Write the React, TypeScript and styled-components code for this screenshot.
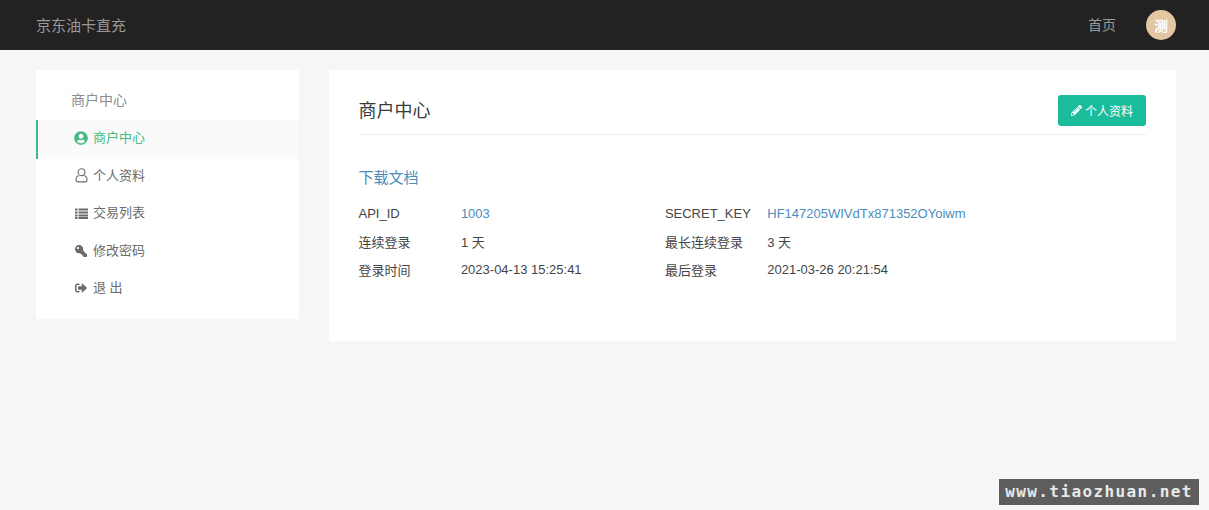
import { FaKey, FaPencilAlt, FaSignOutAlt, FaUserCircle } from 'react-icons/fa';
import styled, { createGlobalStyle } from 'styled-components';

const GlobalStyle = createGlobalStyle`
  html, body {
    margin: 0;
    padding: 0;
    min-height: 510px;
    background: #f4f6f8;
    font-family: "Liberation Sans", "Noto Sans CJK SC", sans-serif;
    color: #333;
  }
`;

const UserOutline = () => (
  <svg width="13" height="15" viewBox="0 0 13 15" fill="none" stroke="currentColor" strokeWidth="1.1">
    <circle cx="6.5" cy="4.2" r="3.4" />
    <path d="M3.6 7.6C2 8.3 1 9.6 1 11.2v1c0 1 .7 1.7 1.7 1.7h7.6c1 0 1.7-.7 1.7-1.7v-1c0-1.6-1-2.9-2.6-3.6" />
  </svg>
);

const ListIcon = () => (
  <svg width="13" height="11" viewBox="0 0 13 11" fill="currentColor">
    <path d="M0 .5h2.5v2H0zM3.5.5H13v2H3.5zM0 3.5h2.5v2H0zM3.5 3.5H13v2H3.5zM0 6.5h2.5v2H0zM3.5 6.5H13v2H3.5zM0 9h2.5v2H0zM3.5 9H13v2H3.5z" />
  </svg>
);

const menu = [
  { label: '商户中心', icon: <FaUserCircle size={14} />, active: true },
  { label: '个人资料', icon: <UserOutline /> },
  { label: '交易列表', icon: <ListIcon /> },
  { label: '修改密码', icon: <FaKey size={12} style={{ transform: 'scaleX(-1)' }} /> },
  { label: '退 出', icon: <FaSignOutAlt size={12} /> },
];

const App = () => {
  return (
    <div>
      <GlobalStyle />
      <Header>
        <Brand>京东油卡直充</Brand>
        <HeaderRight>
          <HomeLink>首页</HomeLink>
          <Avatar>测</Avatar>
        </HeaderRight>
      </Header>
      <Main>
        <Sidebar>
          <SideTitle>商户中心</SideTitle>
          {menu.map((item) => (
            <MenuItem key={item.label} $active={item.active}>
              <MenuIcon>{item.icon}</MenuIcon>
              {item.label}
            </MenuItem>
          ))}
        </Sidebar>
        <Content>
          <ContentHead>
            <Heading>商户中心</Heading>
            <EditButton>
              <FaPencilAlt />
              个人资料
            </EditButton>
          </ContentHead>
          <DocLink>下载文档</DocLink>
          <InfoGrid>
            <span>API_ID</span>
            <Link>1003</Link>
            <span>SECRET_KEY</span>
            <Link>HF147205WIVdTx871352OYoiwm</Link>
            <span>连续登录</span>
            <span>1 天</span>
            <span>最长连续登录</span>
            <span>3 天</span>
            <span>登录时间</span>
            <span>2023-04-13 15:25:41</span>
            <span>最后登录</span>
            <span>2021-03-26 20:21:54</span>
          </InfoGrid>
        </Content>
      </Main>
      <Watermark>www.tiaozhuan.net</Watermark>
    </div>
  );
};

export default App;

const Header = styled.header`
  height: 50px;
  box-sizing: border-box;
  padding: 0 33px 0 36px;
  background: #222;
  display: flex;
  align-items: center;
  justify-content: space-between;
`;

const Brand = styled.div`
  padding-bottom: 2px;
  font-size: 15px;
  color: #999;
`;

const HeaderRight = styled.div`
  display: flex;
  align-items: center;
  gap: 30px;
`;

const HomeLink = styled.a`
  padding-bottom: 2px;
  font-size: 14px;
  color: #999;
`;

const Avatar = styled.div`
  width: 30px;
  height: 30px;
  border-radius: 50%;
  background: #e3c6a2;
  color: #fff;
  font-size: 14px;
  font-weight: 700;
  display: flex;
  align-items: center;
  justify-content: center;
`;

const Main = styled.main`
  display: flex;
  align-items: flex-start;
  gap: 30px;
  padding: 20px 33px 0 36px;
`;

const Sidebar = styled.nav`
  width: 263px;
  height: 249px;
  flex-shrink: 0;
  box-sizing: border-box;
  padding-top: 20px;
  background: #fff;
`;

const SideTitle = styled.div`
  height: 20px;
  line-height: 20px;
  margin-bottom: 10px;
  padding-left: 35px;
  font-size: 14px;
  color: #8c8c8c;
`;

const MenuItem = styled.a<{ $active?: boolean }>`
  display: flex;
  align-items: center;
  box-sizing: border-box;
  height: ${(p) => (p.$active ? '39px' : '37.5px')};
  margin-bottom: ${(p) => (p.$active ? '-1.5px' : '0')};
  padding: 0 0 ${(p) => (p.$active ? '3px' : '1px')} 36px;
  font-size: 13px;
  line-height: 20px;
  color: ${(p) => (p.$active ? '#44bb85' : '#6b6b6b')};
  background: ${(p) => (p.$active ? '#fafafa' : 'transparent')};
  border-left: 2px solid ${(p) => (p.$active ? '#3dbb82' : 'transparent')};
`;

const MenuIcon = styled.span`
  display: flex;
  align-items: center;
  justify-content: center;
  width: 14px;
  margin-right: 5px;
`;

const Content = styled.section`
  flex: 1;
  height: 271px;
  box-sizing: border-box;
  padding: 25px 30px 0 29.5px;
  background: #fff;
`;

const ContentHead = styled.div`
  display: flex;
  align-items: flex-start;
  justify-content: space-between;
  height: 40px;
  box-sizing: border-box;
  border-bottom: 1px solid #eee;
`;

const Heading = styled.h2`
  margin: 0;
  font-size: 18px;
  font-weight: 400;
  line-height: 32px;
  color: #3a3a3a;
`;

const EditButton = styled.button`
  width: 88px;
  height: 31px;
  padding: 0;
  border: 0;
  border-radius: 3px;
  background: #1abc9c;
  color: #fff;
  font-family: inherit;
  font-size: 12px;
  display: flex;
  align-items: center;
  justify-content: center;
  gap: 3px;

  svg {
    font-size: 11px;
  }
`;

const DocLink = styled.a`
  display: block;
  margin-top: 32px;
  font-size: 15px;
  line-height: 21px;
  color: #4b8dbd;
`;

const InfoGrid = styled.div`
  display: grid;
  grid-template-columns: 102.4px 204px 102.4px 1fr;
  grid-template-rows: 28.5px 27.5px 28.5px;
  align-items: center;
  margin-top: 11px;
  font-size: 13px;
  color: #444;
`;

const Link = styled.a`
  color: #4b8dbd;
`;

const Watermark = styled.div`
  position: fixed;
  left: 999px;
  top: 479px;
  width: 200px;
  height: 26px;
  background: #5e5e5e;
  color: #e8e8e8;
  font-family: "DejaVu Sans Mono", monospace;
  font-size: 16px;
  font-weight: 700;
  letter-spacing: 1.4px;
  line-height: 26px;
  text-align: center;
  white-space: nowrap;
`;
